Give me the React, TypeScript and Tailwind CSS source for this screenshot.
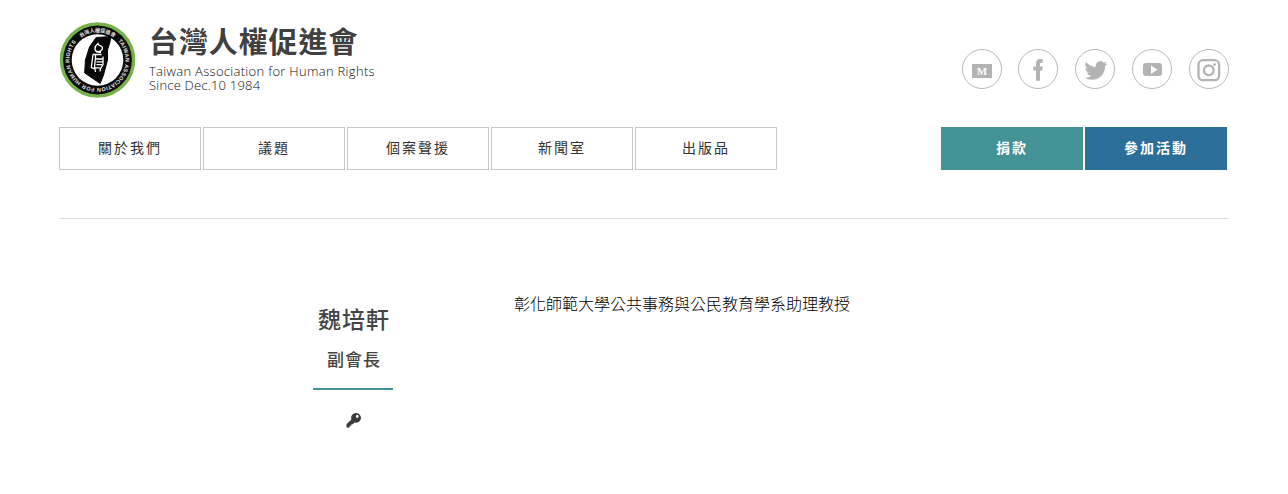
import React from "react";

const navItems = ["關於我們", "議題", "個案聲援", "新聞室", "出版品"];

function Logo() {
  return (
    <svg className="block h-[76px] w-[76px] shrink-0 translate-x-[0.5px]" viewBox="0 0 76 76">
      <defs>
        <path id="ring-top" d="M38 38 m-28 0 a28 28 0 0 1 56 0" />
        <path id="ring" d="M38 38 m20.5 -19 a28 28 0 1 1 -41 0" />
      </defs>
      <circle cx="38" cy="38" r="37.8" fill="#76b24a" />
      <circle cx="38" cy="38" r="34.4" fill="#0c0c0c" />
      <circle cx="38" cy="38" r="25.8" fill="#fff" />
      <g fill="#e4e4e4" fontWeight="700">
        <text fontSize="5.1" fontFamily="'Noto Sans CJK TC', sans-serif">
          <textPath href="#ring-top" startOffset="50%" textAnchor="middle">台灣人權促進會</textPath>
        </text>
        <text fontSize="5.4" fontFamily="'Liberation Sans', sans-serif">
          <textPath href="#ring" startOffset="0" textLength="128" lengthAdjust="spacing">
            TAIWAN ASSOCIATION FOR HUMAN RIGHTS
          </textPath>
        </text>
      </g>
      <path d="M36.7 15.5 L51.5 14.5 L50.2 21 L48 28 L48 38 L44 53 L40.7 61.5 L25.2 51 L25.9 38 L30 25 Z" fill="#080808" stroke="#080808" strokeLinejoin="round" />
      <g fill="none" stroke="#fff" strokeWidth="1.3">
        <path d="M38.5 21.5 C34.5 24.5 34.5 29.5 38.5 29.7 C42.5 29.7 44.5 25.5 41.5 24 C39.5 23.2 38.8 23.5 38.5 21.5 Z" />
        <path d="M36.5 29.5 L41.5 30.5 M33.5 32.5 H42 M33.5 32.5 L31.8 45.5 L35.5 47 L36 50 M36 32.5 V37 H43.5 M35.8 37 L35 45.8 H40.5 M37 39.8 H43.5 M37 42.6 H42.5 M43.5 34.5 V42.5 L41 46.5 L40.5 49.5" />
      </g>
    </svg>
  );
}

function Social({ children, label }: { children: React.ReactNode; label: string }) {
  return (
    <a aria-label={label} className="flex h-10 w-10 items-center justify-center rounded-full border border-[#b8b8b8] text-[#b3b3b3]">
      {children}
    </a>
  );
}

export default function App() {
  return (
    <div className="h-[494px] w-[1288px] overflow-hidden bg-white pl-[59px] font-['Noto_Sans_CJK_TC',sans-serif] text-[#444]">
      <div className="w-[1170px]">
        <header className="flex h-[127px] items-start justify-between pt-[22px]">
          <div className="flex gap-[14px]">
            <Logo />
            <div className="whitespace-nowrap">
              <h1 className="-mt-[1px] text-[29px] leading-[38px] font-bold tracking-[0.9px] text-[#404040]">台灣人權促進會</h1>
              <p className="mt-[5px] font-['Open_Sans',sans-serif] text-[13px] leading-[14px] font-light text-[#111]">
                <span className="block tracking-[0.3px]">Taiwan Association for Human Rights</span>
                <span className="block tracking-[0.2px]">Since Dec.10 1984</span>
              </p>
            </div>
          </div>
          <div className="mt-[27px] flex gap-[17px]">
            <div className="flex gap-4">
              <Social label="Medium">
                <svg className="h-10 w-10 shrink-0" viewBox="0 0 40 40">
                  <rect x="10" y="15" width="20" height="14" fill="currentColor" />
                  <text x="20" y="26" textAnchor="middle" fontFamily="'Liberation Serif', serif" fontWeight="700" fontSize="11" fill="#fff">M</text>
                </svg>
              </Social>
              <Social label="Facebook">
                <svg className="h-10 w-10 shrink-0" viewBox="0 0 40 40">
                  <path d="M18 31.7V21.5H15.3V17.5H18V15Q18 10 22 10H24.7V13.8H23.2Q22 13.8 22 15.2V17.5H24.7L24.2 21.5H22V31.7Z" fill="currentColor" />
                </svg>
              </Social>
            </div>
            <Social label="Twitter">
              <svg className="h-[23px] w-[23px] translate-x-[0.5px] translate-y-[1px]" viewBox="0 0 24 24">
                <path d="M23.95 4.57a10 10 0 0 1-2.82.77 4.96 4.96 0 0 0 2.16-2.72 9.9 9.9 0 0 1-3.12 1.19 4.92 4.92 0 0 0-8.38 4.48A13.93 13.93 0 0 1 1.64 3.16a4.92 4.92 0 0 0 1.52 6.57 4.9 4.9 0 0 1-2.23-.61v.06a4.92 4.92 0 0 0 3.95 4.83 5 5 0 0 1-2.21.08 4.94 4.94 0 0 0 4.6 3.42A9.87 9.87 0 0 1 0 19.54a13.99 13.99 0 0 0 7.55 2.21c9.05 0 14-7.5 14-13.98l-.02-.64a9.94 9.94 0 0 0 2.42-2.56z" fill="currentColor" />
              </svg>
            </Social>
            <Social label="YouTube">
              <svg className="h-10 w-10 shrink-0" viewBox="0 0 40 40">
                <rect x="11" y="14" width="19" height="13" rx="3" fill="currentColor" />
                <path d="M19 16.5V25L25.5 20.7Z" fill="#fff" />
              </svg>
            </Social>
            <Social label="Instagram">
              <svg className="h-10 w-10 shrink-0" viewBox="0 0 40 40" fill="none" stroke="currentColor" strokeWidth="2.3">
                <rect x="9.5" y="11.2" width="20.6" height="20" rx="4.5" />
                <circle cx="19.8" cy="21.3" r="4.8" />
                <circle cx="25.5" cy="15.7" r="1.4" fill="currentColor" stroke="none" />
              </svg>
            </Social>
          </div>
        </header>

        <nav className="flex justify-between pr-[2px] text-[14px] leading-[21px]">
          <div className="flex gap-[2px]">
            {navItems.map((item) => (
              <a key={item} className="flex h-[43px] w-[142px] items-center justify-center border border-[#c8c8c8] pb-[2px] tracking-[2px] text-[#333]">
                {item}
              </a>
            ))}
          </div>
          <div className="flex gap-[2px] font-bold text-white">
            <a className="flex h-[43px] w-[142px] items-center justify-center bg-[#439296] pb-[2px] tracking-[2px]">捐款</a>
            <a className="flex h-[43px] w-[142px] items-center justify-center bg-[#2b6e97] pb-[2px] tracking-[2px]">參加活動</a>
          </div>
        </nav>

        <div className="mt-12 h-px bg-[#dcdcdc]" />

        <main className="flex">
          <section className="ml-[254px] flex w-[80px] flex-col items-center whitespace-nowrap">
            <h2 className="mt-[82px] pl-[2px] text-[23px] leading-[34px] font-medium tracking-[1px]">魏培軒</h2>
            <p className="mt-[12px] pl-[2px] text-[17px] leading-[24px] font-medium tracking-[1px]">副會長</p>
            <div className="mt-[17px] h-[2px] w-full bg-[#439296]" />
            <svg className="mt-[23px] ml-px h-[15px] w-[15px]" viewBox="0 0 16 16">
              <path fillRule="evenodd" d="M10.7 0A5.2 5.2 0 0 0 5.8 7L.5 12V15.5H4V13.7H5.7V12H7.3L9 10.1A5.2 5.2 0 1 0 10.7 0ZM12 2.2A1.5 1.5 0 1 1 12 5.2A1.5 1.5 0 1 1 12 2.2Z" fill="#3c3c3c" />
            </svg>
          </section>
          <p className="mt-[72px] ml-[121px] text-[16px] leading-[24px] font-light whitespace-nowrap text-black">彰化師範大學公共事務與公民教育學系助理教授</p>
        </main>
      </div>
    </div>
  );
}
